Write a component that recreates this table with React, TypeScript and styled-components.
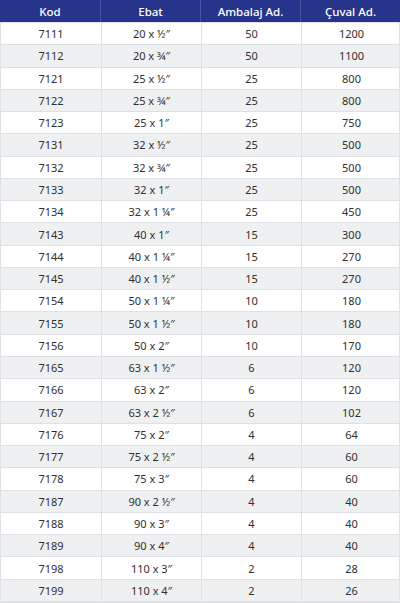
import styled, { createGlobalStyle } from "styled-components";

const rows: [string, string, string, string][] = [
    ["7111", "20 x ½″", "50", "1200"],
    ["7112", "20 x ¾″", "50", "1100"],
    ["7121", "25 x ½″", "25", "800"],
    ["7122", "25 x ¾″", "25", "800"],
    ["7123", "25 x 1″", "25", "750"],
    ["7131", "32 x ½″", "25", "500"],
    ["7132", "32 x ¾″", "25", "500"],
    ["7133", "32 x 1″", "25", "500"],
    ["7134", "32 x 1 ¼″", "25", "450"],
    ["7143", "40 x 1″", "15", "300"],
    ["7144", "40 x 1 ¼″", "15", "270"],
    ["7145", "40 x 1 ½″", "15", "270"],
    ["7154", "50 x 1 ¼″", "10", "180"],
    ["7155", "50 x 1 ½″", "10", "180"],
    ["7156", "50 x 2″", "10", "170"],
    ["7165", "63 x 1 ½″", "6", "120"],
    ["7166", "63 x 2″", "6", "120"],
    ["7167", "63 x 2 ½″", "6", "102"],
    ["7176", "75 x 2″", "4", "64"],
    ["7177", "75 x 2 ½″", "4", "60"],
    ["7178", "75 x 3″", "4", "60"],
    ["7187", "90 x 2 ½″", "4", "40"],
    ["7188", "90 x 3″", "4", "40"],
    ["7189", "90 x 4″", "4", "40"],
    ["7198", "110 x 3″", "2", "28"],
    ["7199", "110 x 4″", "2", "26"],
];

const GlobalStyle = createGlobalStyle`
    html, body {
        margin: 0;
        padding: 0;
        background: #ffffff;
    }
`

export default function App() {
    return (
        <>
            <GlobalStyle />
            <Table>
                <HeaderRow>
                    <HeaderCell>Kod</HeaderCell>
                    <HeaderCell>Ebat</HeaderCell>
                    <HeaderCell>Ambalaj Ad.</HeaderCell>
                    <HeaderCell>Çuval Ad.</HeaderCell>
                </HeaderRow>
                {rows.map((r, i) => (
                    <Row key={r[0]} striped={i % 2 === 1}>
                        {r.map((c, j) => (
                            <Cell key={j}>{c}</Cell>
                        ))}
                    </Row>
                ))}
            </Table>
        </>
    )
};

const Table = styled.div`
    width: 400px;
    height: 603px;
    display: flex;
    flex-direction: column;
    font-family: "Noto Sans", "Liberation Sans", sans-serif;
    box-sizing: border-box;
    border-bottom: 2px solid #dfe1e5;
`

const HeaderRow = styled.div`
    display: grid;
    grid-template-columns: 100px 100px 100px 100px;
    height: 22px;
    flex: none;
    background-color: #27348b;
`

const HeaderCell = styled.div`
    display: flex;
    align-items: center;
    justify-content: center;
    color: #ffffff;
    font-size: 11.5px;
    font-weight: 500;
    border-left: 1px solid #4a55a0;
    &:first-child {
        border-left: none;
    }
`

const Row = styled.div<{ striped: boolean }>`
    display: grid;
    grid-template-columns: 100px 100px 100px 100px;
    flex: 1;
    background-color: ${props => props.striped ? "#eff0f2" : "#ffffff"};
    border-top: 1px solid #dfe1e5;
    border-left: 1px solid #dfe1e5;
    border-right: 1px solid #dfe1e5;
`

const Cell = styled.div`
    display: flex;
    align-items: center;
    justify-content: center;
    color: #303030;
    font-size: 11px;
    border-left: 1px solid #dfe1e5;
    &:first-child {
        border-left: none;
    }
`
